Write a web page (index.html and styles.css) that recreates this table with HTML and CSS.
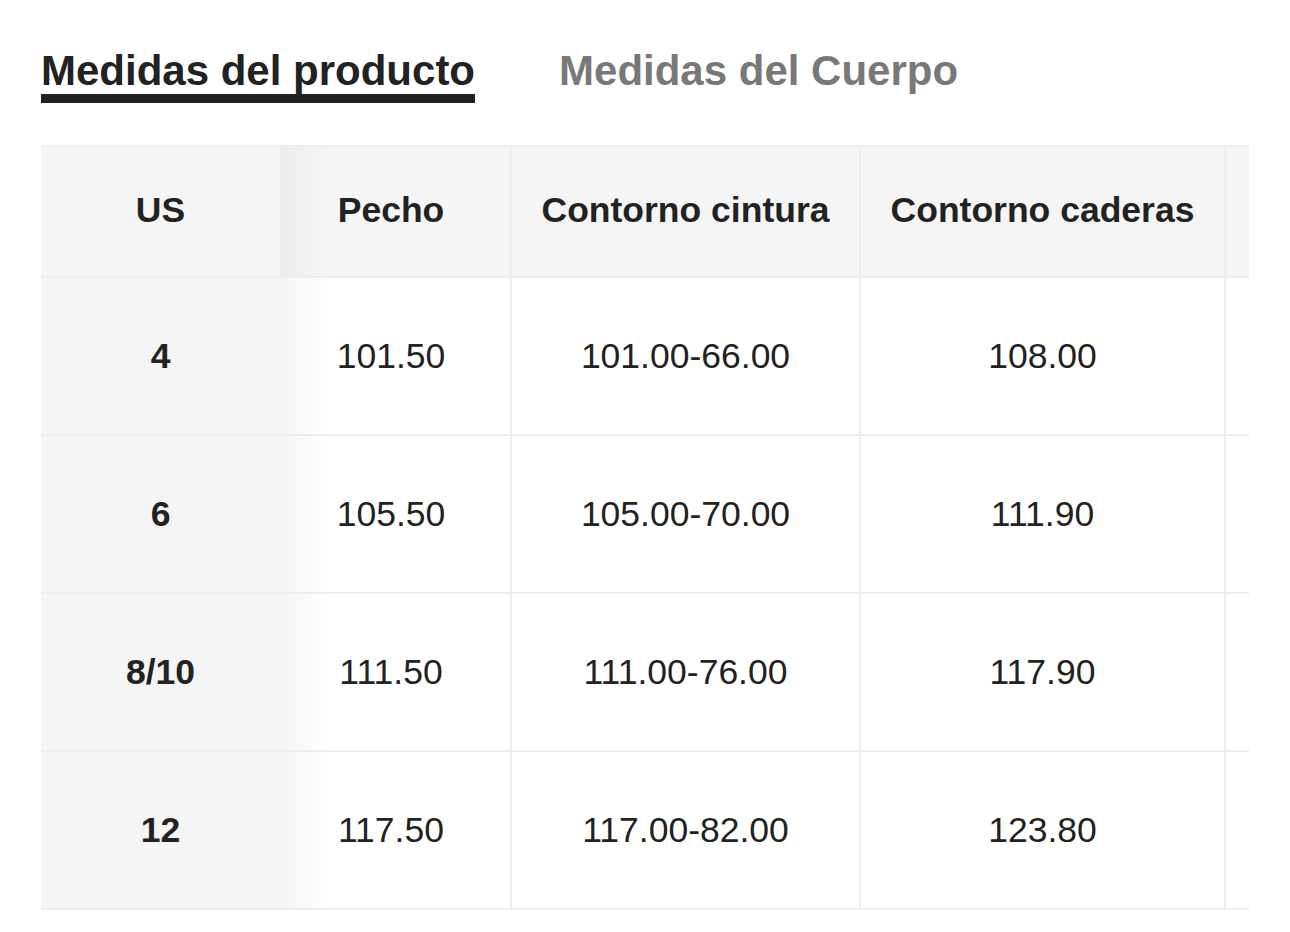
FILE: index.html
```html
<!DOCTYPE html>
<html lang="es">
<head>
<meta charset="utf-8">
<title>Medidas</title>
<link rel="stylesheet" href="styles.css">
</head>
<body>
<div class="page">
  <nav class="tabs">
    <span class="tab tab-active">Medidas del producto</span>
    <span class="tab">Medidas del Cuerpo</span>
  </nav>
  <div class="table-wrap">
    <table class="sizes">
      <colgroup>
        <col class="c1"><col class="c2"><col class="c3"><col class="c4"><col class="c5">
      </colgroup>
      <thead>
        <tr>
          <th class="first">US</th>
          <th class="second">Pecho</th>
          <th>Contorno cintura</th>
          <th>Contorno caderas</th>
          <th></th>
        </tr>
      </thead>
      <tbody>
        <tr><th class="first">4</th><td class="second">101.50</td><td>101.00-66.00</td><td>108.00</td><td></td></tr>
        <tr><th class="first">6</th><td class="second">105.50</td><td>105.00-70.00</td><td>111.90</td><td></td></tr>
        <tr><th class="first">8/10</th><td class="second">111.50</td><td>111.00-76.00</td><td>117.90</td><td></td></tr>
        <tr><th class="first">12</th><td class="second">117.50</td><td>117.00-82.00</td><td>123.80</td><td></td></tr>
      </tbody>
    </table>
  </div>
</div>
</body>
</html>
```
FILE: styles.css
```css
html, body {
  margin: 0;
  padding: 0;
  background: #ffffff;
}
body {
  font-family: "Liberation Sans", Arial, Helvetica, sans-serif;
  color: #222222;
}
.page {
  padding: 48px 0 0 41px;
  width: 1208px;
}
.tabs {
  display: flex;
  gap: 84px;
  align-items: flex-start;
}
.tab {
  font-size: 42px;
  font-weight: 700;
  line-height: 46px;
  color: #787878;
  white-space: nowrap;
  border-bottom: 9px solid transparent;
}
.tab-active {
  color: #222222;
  border-bottom-color: #222222;
}
.table-wrap {
  margin-top: 42px;
  width: 1208px;
  overflow: hidden;
}
.sizes {
  table-layout: fixed;
  border-collapse: collapse;
  width: 1424px;
  font-size: 35.5px;
}
.c1 { width: 239px; }
.c2 { width: 231px; }
.c3 { width: 349px; }
.c4 { width: 365px; }
.c5 { width: 240px; }
.sizes th,
.sizes td {
  border: 2px solid #ededed;
  text-align: center;
  vertical-align: middle;
  padding: 0;
}
.sizes thead th {
  height: 126px;
  padding-bottom: 3px;
  background: #f5f5f5;
  font-weight: 700;
}
.sizes tbody td,
.sizes tbody th {
  height: 156px;
}
.sizes tbody td {
  font-weight: 400;
  background: #ffffff;
}
.sizes .first {
  background: #f5f5f5;
  font-weight: 700;
  border-left: none;
  border-right: none;
  border-top-color: #eeeeee;
}
.sizes thead .first {
  border-top-color: #f0f0f0;
}
.sizes td.second {
  border-left: none;
  padding-right: 8px;
  background: linear-gradient(to right, rgba(0, 0, 0, 0.045), rgba(0, 0, 0, 0) 50px), #ffffff;
}
.sizes th.second {
  border-left: none;
  padding-right: 8px;
  background: linear-gradient(to right, rgba(0, 0, 0, 0.035), rgba(0, 0, 0, 0) 50px), #f5f5f5;
}
```
